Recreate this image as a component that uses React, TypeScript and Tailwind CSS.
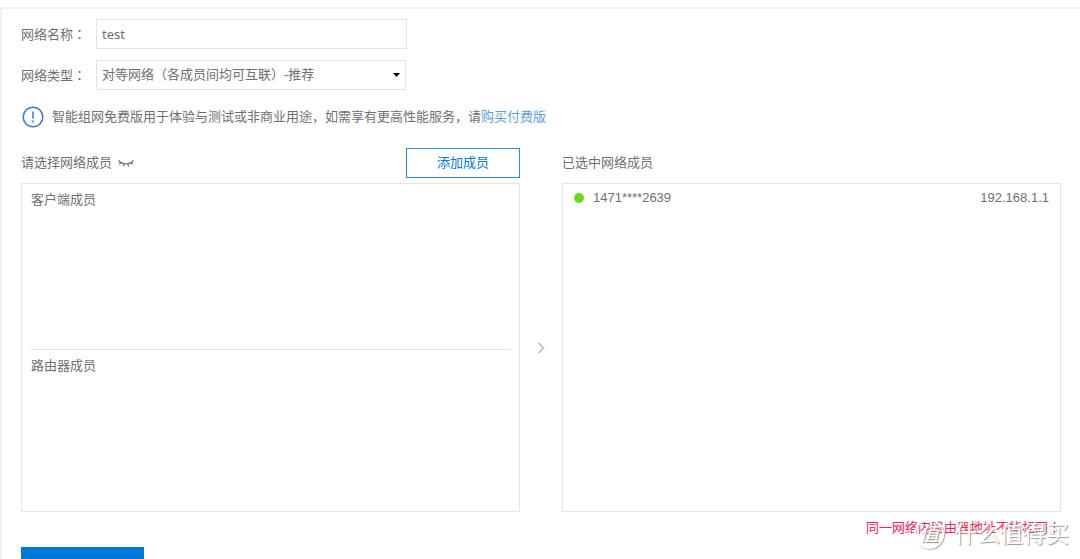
import React from "react";

const InfoIcon = () => (
  <svg className="w-[22px] h-[22px] shrink-0" viewBox="0 0 22 22" fill="none">
    <circle cx="11" cy="11" r="9.8" stroke="#3a78c4" strokeWidth="1.5" />
    <path d="M11 5.5v7.3M11 14.6v1.8" stroke="#3a78c4" strokeWidth="1.5" />
  </svg>
);

const ClosedEyeIcon = () => (
  <svg className="w-4 h-3" viewBox="0 0 16 12" fill="none" stroke="#777">
    <path d="M0.5 3.5C4 8 12 8 15.5 3.5" strokeWidth="1.4" />
    <path
      d="M3 5.2L1.2 7.3M6.2 6.8L5.4 9.6M9.8 6.8L10.6 9.6M13 5.2L14.8 7.3"
      strokeWidth="1.2"
    />
  </svg>
);

const ChevronIcon = () => (
  <svg className="w-2 h-3" viewBox="0 0 8 12" fill="none">
    <path d="M1.5 1L6.5 6L1.5 11" stroke="#bbb" strokeWidth="1.6" />
  </svg>
);

// Punctuation sits in the middle of its cell
const Mark = ({ children }: { children: string }) => (
  <span className="font-['Noto_Sans_CJK_TC',sans-serif]">{children}</span>
);

const Watermark = () => (
  <div className="absolute -right-2 top-[2px] flex items-center gap-[10px] text-white pointer-events-none">
    <span className="flex items-center justify-center w-[30px] h-[30px] rounded-full border-2 border-white text-xl leading-none italic shadow-[1px_1px_1px_#aaa] [text-shadow:1px_1px_1px_#888]">
      值
    </span>
    <span className="text-[23px] leading-[30px] whitespace-nowrap [text-shadow:1px_1px_1px_#999]">
      什么值得买
    </span>
  </div>
);

const App = () => {
  return (
    <div className="h-screen overflow-hidden bg-white pt-[7px] text-[13px] leading-5 text-[#707070] font-['Liberation_Sans','Noto_Sans_CJK_SC',sans-serif]">
      <form className="border-t-2 border-l-2 border-[#f1f1f1] px-[19px] pt-[10px]">
        <div className="flex items-center">
          <label htmlFor="name" className="w-[75px]">
            网络名称<Mark>：</Mark>
          </label>
          <input
            id="name"
            defaultValue="test"
            className="w-[311px] h-[30px] px-[5px] border border-[#e2e2e2] font-['Noto_Sans',sans-serif]"
          />
        </div>
        <div className="flex items-center mt-[11px]">
          <label htmlFor="type" className="w-[75px]">
            网络类型<Mark>：</Mark>
          </label>
          <div className="relative">
            <select
              id="type"
              className="appearance-none w-[310px] h-[30px] px-[5px] border border-[#e2e2e2] bg-white"
            >
              <option>对等网络（各成员间均可互联）-推荐</option>
            </select>
            <svg
              className="absolute right-[6px] top-[13px] w-[7px] h-1 pointer-events-none"
              viewBox="0 0 7 4"
            >
              <path d="M0 0h7L3.5 4z" fill="#000" />
            </svg>
          </div>
        </div>

        <div className="flex items-center gap-2 mt-4 pl-px">
          <InfoIcon />
          <p>
            智能组网免费版用于体验与测试或非商业用途，如需享有更高性能服务，请
            <a href="#buy" className="text-[#5a9fd8]">
              购买付费版
            </a>
          </p>
        </div>

        <div className="grid grid-cols-[1fr_42px_1fr] mt-5">
          <div className="flex items-center justify-between">
            <h2 className="flex items-center gap-[6px]">
              请选择网络成员
              <ClosedEyeIcon />
            </h2>
            <button
              type="button"
              className="w-[114px] h-[30px] border border-[#2a8ae0] text-[#0078d7]"
            >
              添加成员
            </button>
          </div>
          <h2 className="col-start-3 self-center">已选中网络成员</h2>
        </div>

        <div className="grid grid-cols-[1fr_42px_1fr] mt-[5px]">
          <div className="border border-[#e5e5e5] px-[9px]">
            <section className="h-[166px] pt-[6px] border-b border-[#e2e2e2]">
              <h3>客户端成员</h3>
            </section>
            <section className="h-[161px] pt-[6px]">
              <h3>路由器成员</h3>
            </section>
          </div>
          <div className="flex items-center justify-center">
            <ChevronIcon />
          </div>
          <ul className="border border-[#e5e5e5] px-[11px] pt-1">
            <li className="flex items-center">
              <span className="w-[10px] h-[10px] mr-[9px] rounded-full bg-[#67dc1d]" />
              <span>1471****2639</span>
              <span className="ml-auto">192.168.1.1</span>
            </li>
          </ul>
        </div>

        <div className="relative mt-[5px] text-right text-[#ff1a55]">
          <p>
            同一网络内路由器地址不能相同<Mark>！</Mark>
          </p>
          <Watermark />
        </div>

        <button
          type="submit"
          aria-label="保存"
          className="block w-[123px] h-[34px] mt-[9px] bg-[#0078d7]"
        />
      </form>
    </div>
  );
};

export default App;
